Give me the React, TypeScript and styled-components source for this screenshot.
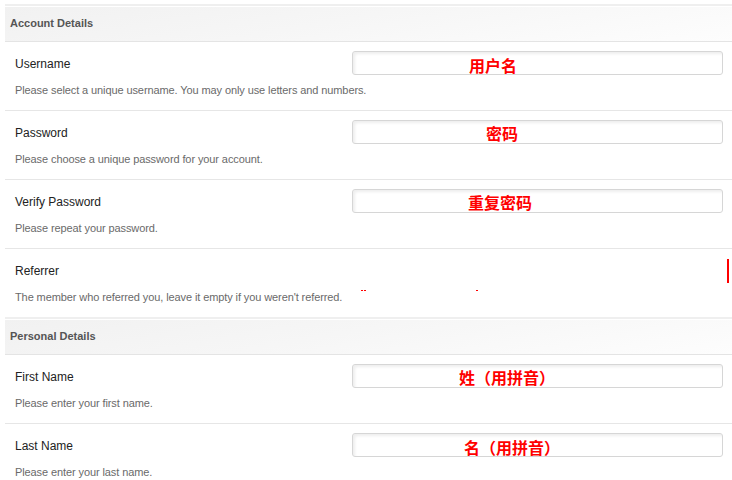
import styled, { createGlobalStyle } from "styled-components";

const GlobalStyle = createGlobalStyle`
	html, body {
		margin: 0;
		padding: 0;
		background: #fff;
		font-family: "Liberation Sans", Arial, sans-serif;
	}
`;

const Page = styled.div`
	width: 727px;
	padding: 4px 0 0 5px;
`;

const SectionHeader = styled.div`
	border-top: 2px solid #efefef;
	border-bottom: 1px solid #e4e4e4;
	box-shadow: inset 0 1px 0 #fff;
	background: linear-gradient(170deg, #f1f1f1 0%, #f6f6f6 45%, #fdfdfd 100%);
	height: 35px;
	line-height: 35px;
	padding-left: 5px;
	font-size: 11px;
	font-weight: bold;
	color: #555;
`;

const Row = styled.div<{ $last?: boolean }>`
	position: relative;
	display: grid;
	grid-template-columns: minmax(0, 1fr) 371px;
	padding: 9px 9px 0 10px;
	box-sizing: border-box;
	border-bottom: ${(p) => (p.$last ? "none" : "1px solid #e6e6e6")};
	height: ${(p) => (p.$last ? "68px" : "69px")};
`;

const Info = styled.div`
	display: flex;
	flex-direction: column;
	min-width: 0;
	padding-top: 1px;
`;

const Label = styled.div`
	font-size: 12px;
	line-height: 24px;
	color: #222;
`;

const Desc = styled.div`
	margin-top: 7px;
	font-size: 11px;
	line-height: 14px;
	color: #6a6a6a;
	white-space: nowrap;
	letter-spacing: -0.1px;
`;

const Field = styled.input<{ $indent: number; $drop: number }>`
	box-sizing: border-box;
	width: 371px;
	height: 24px;
	margin: 0;
	border: 1px solid #d6d6d6;
	border-radius: 3px;
	box-shadow: inset 2px 2px 3px rgba(0, 0, 0, 0.07);
	background: #fff;
	padding: ${(p) => p.$drop}px 0 0 ${(p) => p.$indent}px;
	font-family: "Noto Sans CJK SC", sans-serif;
	font-size: 16px;
	font-weight: bold;
	color: #f00;
	outline: none;
`;

const Speck = styled.span<{ $w: number; $h: number }>`
	position: absolute;
	width: ${(p) => p.$w}px;
	height: ${(p) => p.$h}px;
	background: #f00;
`;

type Item = {
	label: string;
	desc: string;
	hint?: string;
	indent?: number;
	drop?: number;
};

const account: Item[] = [
	{
		label: "Username",
		desc: "Please select a unique username. You may only use letters and numbers.",
		hint: "用户名",
		indent: 116,
		drop: 3,
	},
	{
		label: "Password",
		desc: "Please choose a unique password for your account.",
		hint: "密码",
		indent: 133,
		drop: 2,
	},
	{
		label: "Verify Password",
		desc: "Please repeat your password.",
		hint: "重复密码",
		indent: 115,
		drop: 2,
	},
];

const personal: Item[] = [
	{
		label: "First Name",
		desc: "Please enter your first name.",
		hint: "姓（用拼音）",
		indent: 106,
		drop: 1,
	},
	{
		label: "Last Name",
		desc: "Please enter your last name.",
		hint: "名（用拼音）",
		indent: 111,
		drop: 4,
	},
];

const FormRow = ({ item }: { item: Item }) => (
	<Row>
		<Info>
			<Label>{item.label}</Label>
			<Desc>{item.desc}</Desc>
		</Info>
		{item.hint && (
			<Field readOnly value={item.hint} $indent={item.indent ?? 0} $drop={item.drop ?? 0} />
		)}
	</Row>
);

const App = () => {
	return (
		<Page>
			<GlobalStyle />
			<SectionHeader>Account Details</SectionHeader>
			{account.map((item) => (
				<FormRow key={item.label} item={item} />
			))}
			<Row $last>
				<Info>
					<Label>Referrer</Label>
					<Desc>The member who referred you, leave it empty if you weren't referred.</Desc>
				</Info>
				{/* leftovers of the hidden referrer box */}
				<Speck $w={2} $h={1} style={{ left: 356, top: 41 }} />
				<Speck $w={2} $h={1} style={{ left: 359, top: 41 }} />
				<Speck $w={2} $h={1} style={{ left: 471, top: 41 }} />
				<Speck $w={2} $h={24} style={{ left: 722, top: 10 }} />
			</Row>
			<SectionHeader>Personal Details</SectionHeader>
			{personal.map((item) => (
				<FormRow key={item.label} item={item} />
			))}
		</Page>
	);
};

export default App;
